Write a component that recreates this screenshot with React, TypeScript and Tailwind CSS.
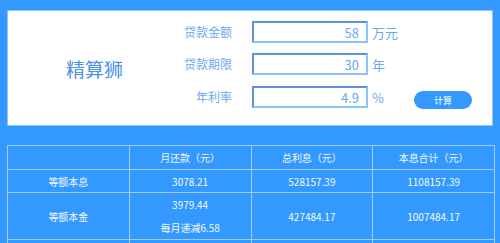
import React from "react";

const font = { fontFamily: '"Noto Sans CJK SC", "Noto Sans", sans-serif' };

function Row({ label, value, unit }: { label: string; value: string; unit: string }) {
  return (
    <div className="flex items-center h-[22px]">
      <div className="w-[51px] text-right text-[12px] text-[#6aa9f2] leading-none whitespace-nowrap">{label}</div>
      <div className="ml-[20px] w-[116px] h-[22px] border-2 border-t-[#5b93d6] border-l-[#5b93d6] border-b-[#8fc3fb] border-r-[#8fc3fb] bg-white flex items-center justify-end pr-[7px] text-[13px] text-[#6aa9f2] leading-none">
        {value}
      </div>
      <div className="ml-[4px] text-[13px] text-[#6aa9f2] leading-none">{unit}</div>
    </div>
  );
}

export default function App() {
  const c = "border border-[#9fccfb]";
  return (
    <div className="w-[500px] h-[243px] bg-[#3399ff] pt-[10px] px-[7px] overflow-hidden" style={font}>
      <div className="h-[116px] bg-white border border-[#8cc4ff] flex">
        <div className="w-[173px] flex items-center justify-center text-[19px] text-[#4a93e8] pt-[2px]">精算狮</div>
        <div className="flex flex-col gap-[10px] pt-[10px]">
          <Row label="贷款金额" value="58" unit="万元" />
          <Row label="贷款期限" value="30" unit="年" />
          <div className="flex items-center">
            <Row label="年利率" value="4.9" unit="%" />
            <div className="ml-[30px] mt-[6px] w-[58px] h-[18px] rounded-full bg-[#3399ff] text-white text-[9px] flex items-center justify-center leading-none">计算</div>
          </div>
        </div>
      </div>
      <table className="mt-[19px] w-[488px] border-collapse table-fixed text-[#f4f9ff] text-[10px] text-center">
        <tbody>
          <tr className="h-[24px]">
            <td className={c}></td>
            <td className={c}>月还款（元）</td>
            <td className={c}>总利息（元）</td>
            <td className={c}>本息合计（元）</td>
          </tr>
          <tr className="h-[23px]">
            <td className={c}>等额本息</td>
            <td className={c}>3078.21</td>
            <td className={c}>528157.39</td>
            <td className={c}>1108157.39</td>
          </tr>
          <tr className="h-[47px]">
            <td className={c}>等额本金</td>
            <td className={`${c} leading-[23px]`}>
              <div>3979.44</div>
              <div>每月递减6.58</div>
            </td>
            <td className={c}>427484.17</td>
            <td className={c}>1007484.17</td>
          </tr>
          <tr className="h-[23px]">
            <td className={c}></td>
            <td className={c}></td>
            <td className={c}></td>
            <td className={c}></td>
          </tr>
        </tbody>
      </table>
    </div>
  );
}
